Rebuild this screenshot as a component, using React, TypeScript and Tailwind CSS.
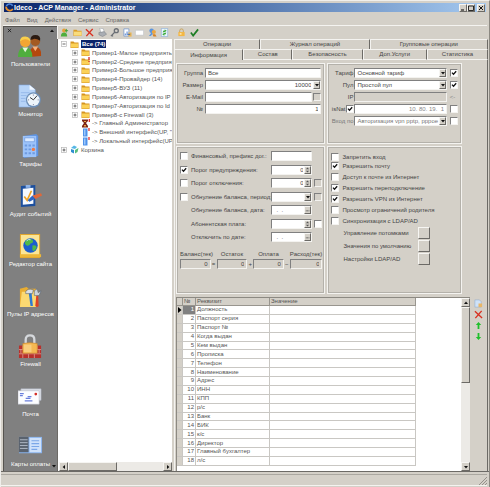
import { useState } from "react";
import type { ReactNode } from "react";
import clsx from "clsx";

const sunken = "border border-t-[#808080] border-l-[#808080] border-r-[#f4f3f0] border-b-[#f4f3f0]";
const raised = "border border-t-[#f6f5f2] border-l-[#f6f5f2] border-r-[#6c6a66] border-b-[#6c6a66] bg-[#d4d0c8]";

/* ---------- small controls ---------- */

function Arrow({ dir = "down" }: { dir?: "up" | "down" | "left" | "right" }) {
  const d = {
    up: "M1 4 L3 1.6 L5 4Z",
    down: "M1 2 L3 4.4 L5 2Z",
    left: "M4 1 L1.6 3 L4 5Z",
    right: "M2 1 L4.4 3 L2 5Z",
  }[dir];
  return (
    <svg viewBox="0 0 6 6" className="size-[6px] shrink-0">
      <path d={d} fill="#111" />
    </svg>
  );
}

function Check({ id, label, on, off, muted }: { id: string; label?: string; on?: boolean; off?: boolean; muted?: boolean }) {
  return (
    <span className="relative flex size-[8px] shrink-0">
      <input
        id={id}
        type="checkbox"
        aria-label={label}
        defaultChecked={on}
        disabled={off}
        className={clsx("peer size-[8px] appearance-none", sunken, muted ? "bg-[#d4d0c8]" : "bg-white")}
      />
      <svg viewBox="0 0 8 8" className="pointer-events-none absolute inset-0 hidden size-[8px] peer-checked:block">
        <path d="M2 3.6 L3.5 5.3 L6.2 2.3" fill="none" stroke="#111" strokeWidth="1.3" />
      </svg>
    </span>
  );
}

function Text({ id, label, value = "", right, off, className }: { id: string; label?: string; value?: string; right?: boolean; off?: boolean; className?: string }) {
  return (
    <input
      id={id}
      type="text"
      aria-label={label}
      defaultValue={value}
      disabled={off}
      className={clsx("h-[10px] min-w-0 px-[2px] outline-none", sunken, right && "text-right", off ? "bg-[#d4d0c8]" : "bg-white", className ?? "w-0 flex-1")}
    />
  );
}

function Drop({ id, value, right, className }: { id: string; value: string; right?: boolean; className?: string }) {
  return (
    <span className={clsx("flex h-[10px] min-w-0 items-center bg-white", sunken, className ?? "flex-1")}>
      <select id={id} className={clsx("h-[8px] w-0 min-w-0 flex-1 appearance-none bg-transparent pl-[2px] outline-none", right && "pr-[2px] [text-align-last:right]")}>
        <option>{value}</option>
      </select>
      <span className={clsx("flex h-[8px] w-[7px] shrink-0 items-center justify-center", raised)}>
        <Arrow />
      </span>
    </span>
  );
}

function Spin({ id, value, dots }: { id: string; value: string; dots?: boolean }) {
  return (
    <span className={clsx("flex h-[10px] w-[41px] items-center bg-white", sunken)}>
      <input id={id} type="text" defaultValue={value} className={clsx("h-[8px] w-0 min-w-0 flex-1 px-[1px] outline-none", dots ? "pl-[4px]" : "text-right")} />
      <span className={clsx("flex h-[8px] w-[7px] shrink-0 items-center justify-center", raised)}>
        <svg viewBox="0 0 6 8" className="h-[8px] w-[6px]">
          {dots ? <path d="M1 5h1M2.6 5h1M4.2 5h1" stroke="#444" /> : <path d="M1 3 L3 1 L5 3ZM1 5 L3 7 L5 5Z" fill="#555" />}
        </svg>
      </span>
    </span>
  );
}

function Group({ children, className }: { children: ReactNode; className?: string }) {
  return (
    <div className="border border-[#f4f3f0]">
      <div className={clsx("h-full border border-[#b4b1aa]", className)}>{children}</div>
    </div>
  );
}

/* ---------- sidebar drawings ---------- */

const sideItems: { title: string; icon: ReactNode }[] = [
  {
    title: "Пользователи",
    icon: (
      <>
        <path d="M12 24 Q11 14 18 13 Q25 14 24 23Z" fill="#b4480e" />
        <path d="M15 13 l3 5 3-5z" fill="#f6b27c" />
        <circle cx="18" cy="7.5" r="5" fill="#a35a22" />
        <path d="M13 6 Q13 1 18 1 Q24 1 23 7 Q20 5 17 5 Q15 6 13 6Z" fill="#2a1a12" />
        <path d="M0 24 Q0 14 7 13.500 Q15 14 15 24Z" fill="#4fae3d" />
        <path d="M4.500 14 l3 5 3-5z" fill="#e8f6dc" />
        <circle cx="7.500" cy="8.500" r="5.300" fill="#f3a632" />
        <path d="M2 8 Q2 2.500 7.500 2.500 Q13 3 13 8 Q10 5 7 5.500 Q4 6 2 8Z" fill="#f8cf4c" />
      </>
    ),
  },
  {
    title: "Монитор",
    icon: (
      <>
        <path d="M1 1 H12 L18 6 V24 H1Z" fill="#b7d4f8" stroke="#7da4de" strokeWidth=".6" />
        <path d="M12 1 V6 H18Z" fill="#f2f8ff" />
        <path d="M3 9h9M3 12h6M3 15h5M3 18h5" stroke="#8eb3e6" strokeWidth=".8" />
        <circle cx="16" cy="16.500" r="7.800" fill="#6d8fb8" />
        <circle cx="16" cy="16.500" r="6.500" fill="#eef5fb" />
        <path d="M16 16.500 L20 12 M16 16.500 L12.500 14" stroke="#333" strokeWidth="1" />
        <path d="M16 11v1M16 21v1M10.500 16.500h1M20.500 16.500h1" stroke="#557" strokeWidth=".8" />
      </>
    ),
  },
  {
    title: "Тарифы",
    icon: (
      <>
        <path d="M6 2 L19 0 L21 2 V23 L6 25Z" fill="#5f93e0" />
        <path d="M5 2 H19 V24 H5Z" fill="#9cc3fa" />
        <path d="M7 4 H17 V8 H7Z" fill="#dcebff" stroke="#5c8bd8" strokeWidth=".6" />
        <path d="M7 11h2.500v2H7zM11 11h2.500v2H11zM15 11h2.500v2H15zM7 15h2.500v2H7zM11 15h2.500v2H11zM7 19h2.500v2H7zM11 19h2.500v2H11zM15 19h2.500v2H15z" fill="#6f9be0" />
        <circle cx="16" cy="16" r="1.800" fill="#ee7b46" />
      </>
    ),
  },
  {
    title: "Аудит событий",
    icon: (
      <>
        <path d="M3 2 L18 1 V23 L3 24Z" fill="#1c4f9e" />
        <path d="M5 5 L16 4 V20.500 L5 21.500Z" fill="#f5f9ff" />
        <path d="M8 1h5v3H8z" fill="#8fb4e8" />
        <path d="M6.500 13 L9.500 17 L14 7" fill="none" stroke="#efa427" strokeWidth="1.800" />
        <path d="M10 17 L15 12 L18 15 L12 18.500Z" fill="#2d66c4" />
        <path d="M15 12 L24 9.500 L25 12 L18 15.500Z" fill="#e0683a" />
      </>
    ),
  },
  {
    title: "Редактор сайта",
    icon: (
      <>
        <path d="M2 0 H23 V25 H2Z" fill="#e0a42c" />
        <path d="M3 1 H22 V24 H3Z" fill="#fbe596" />
        <path d="M2 24 H24 V21 H2Z" fill="#edb83a" />
        <circle cx="13" cy="12" r="7.500" fill="#1d5dcd" />
        <path d="M8 7 Q12 4 15 6 Q17 9 13 10 Q12 13 9 12 Q6 10 8 7ZM15 12 Q19 11 19.500 14 Q17 19 15 17Z" fill="#52b848" />
        <path d="M9 7 Q11 5 13 6" stroke="#c8ecff" fill="none" strokeWidth="1" />
      </>
    ),
  },
  {
    title: "Пулы IP адресов",
    icon: (
      <>
        <path d="M2 5 L9 3 L11 5 H19 V24 H2Z" fill="#e9ad32" />
        <path d="M4 8 H21 L19 24 H2Z" fill="#fbd972" />
        <path d="M11 8 L13 23 L15.500 23 L14 8Z" fill="#2f7ad1" />
        <path d="M8 8 Q10 4 16 6 L15 10 H8Z" fill="#d9dee4" stroke="#596575" strokeWidth=".6" />
        <path d="M19 12 H21 L21.500 23 Q20 25 18 23Z" fill="#dc4126" />
        <path d="M17 7 V12 H22 L24 7 L21 9 L20 5Z" fill="#cbd3da" stroke="#596575" strokeWidth=".6" />
      </>
    ),
  },
  {
    title: "Firewall",
    icon: (
      <>
        <path d="M1 12 H24 V25 H1Z" fill="#b7302b" />
        <path d="M1 16.200h23M1 20.600h23M5 12v4M20 12v4M3 16v4M8 16v4M17 16v4M22 16v4M5 21v4M11 21v4M17 21v4" stroke="#e7b1a6" strokeWidth=".7" />
        <path d="M8 10 V6 Q8 1.500 12.500 1.500 Q17 1.500 17 6 V10" fill="none" stroke="#d5d8dc" strokeWidth="2.400" />
        <path d="M5 10 Q12 8 20 10 V20 H5Z" fill="#f5b851" stroke="#c9842a" strokeWidth=".6" />
        <path d="M6 11 h8 v8 h-8z" fill="#fbd790" opacity=".7" />
      </>
    ),
  },
  {
    title: "Почта",
    icon: (
      <>
        <path d="M3 5 H24 V17 H3Z" fill="#dfe3ea" stroke="#a9aebb" strokeWidth=".6" />
        <path d="M0 7 H22 V21 H0Z" fill="#fcfdff" stroke="#b5bac6" strokeWidth=".6" />
        <path d="M2 10h4M2 12h3M8 15h5M7 17.500h8M10 13h4" stroke="#6a7fdc" strokeWidth="1.300" />
        <circle cx="18.500" cy="10.500" r="1.400" fill="#d42e26" />
      </>
    ),
  },
  {
    title: "Карты оплаты",
    icon: (
      <>
        <path d="M1 3 H25 V20 H1Z" fill="#8ab4ee" />
        <path d="M1 3 H11 V19 H1Z" fill="#59626e" />
        <path d="M2 6h8M2 9h8M2 12h8M2 15h8" stroke="#b9c3cf" strokeWidth=".9" />
        <path d="M12 4 H24 V19 H12Z" fill="#cfe2fb" />
        <path d="M14 7h8M14 10h8M14 13h8M14 16h6" stroke="#7ba7e8" strokeWidth="1.200" />
      </>
    ),
  },
];

function Sidebar() {
  return (
    <nav className="relative flex w-[54px] shrink-0 flex-col border-t border-l border-[#55534f] bg-[#808080] text-white">
      <div className="flex h-[7px] items-center justify-between pr-[2px] pl-[3px]">
        <button type="button" aria-label="Закрыть панель">
          <svg viewBox="0 0 6 6" className="block size-[5px]"><path d="M1 1 L5 5 M5 1 L1 5" stroke="#111" strokeWidth=".9" /></svg>
        </button>
        <Arrow dir="up" />
      </div>
      {sideItems.map((it) => (
        <button key={it.title} type="button" className="mb-[15px] flex flex-col items-center last-of-type:mb-0">
          <svg viewBox="0 0 26 26" className="size-[25px]">{it.icon}</svg>
          <span className="h-[10px] whitespace-nowrap leading-[10px]">{it.title}</span>
        </button>
      ))}
      <span className="absolute right-0 bottom-[2px]"><Arrow /></span>
    </nav>
  );
}

/* ---------- toolbar ---------- */

const redCross = <path d="M1 1.500 L9 9 M8.500 1 L1.500 9" stroke="#d83020" strokeWidth="1.500" fill="none" />;

const tools: { name: string; icon: ReactNode }[] = [
  { name: "Добавить пользователя", icon: <><circle cx="4.500" cy="2.800" r="2.200" fill="#e7a13a" /><path d="M1 9.500 Q1 5 4.500 5 Q8 5 8 9.500Z" fill="#4fae3d" /><path d="M7 1v4M5.500 3h3.500" stroke="#39a02c" strokeWidth="1" /></> },
  { name: "Добавить группу", icon: <><path d="M.5 2 H4 L5 3 H9.500 V9 H.5Z" fill="#d99c27" /><path d="M1 4 H9.500 V8.500 H1Z" fill="#f9dc7c" /></> },
  { name: "Удалить", icon: redCross },
  { name: "Печать", icon: <><path d="M2 0 L6 1 L7 5 L3 5Z" fill="#fff" stroke="#8b939c" strokeWidth=".5" /><path d="M1 5 L7 4 L9.500 7 L5 9.500 L1 7.500Z" fill="#a9adb3" stroke="#6f747b" strokeWidth=".5" /></> },
  { name: "Пароль", icon: <><circle cx="7" cy="3" r="2.200" fill="none" stroke="#6b6f75" strokeWidth="1.500" /><path d="M5.500 4.500 L1 9 M2 8 L3.300 9.300" stroke="#6b6f75" strokeWidth="1.400" /></> },
  { name: "Отчёт", icon: <><path d="M1 1 H6.500 V9 H1Z" fill="#fff" stroke="#5c87c8" strokeWidth=".7" /><path d="M2 6h1v2H2zM4 4h1v4H4z" fill="#3a70ca" /><path d="M6 5 H9.500 V9.500 H6Z" fill="#e9b552" /><path d="M5 7h3" stroke="#2c5db0" /></> },
  { name: "Письмо", icon: <path d="M.5 2.500 H9.500 V8 H.5Z" fill="#fff" stroke="#b9bcc4" strokeWidth=".6" /> },
  { name: "Права", icon: <><circle cx="4" cy="3" r="2.500" fill="#5a94dd" /><circle cx="6.500" cy="4.500" r="2.300" fill="#eda640" /><path d="M1 9 L4 5 L5.500 6.500 L3 9Z" fill="#5a94dd" /><path d="M5 7h3l1.500 2.500H6z" fill="#d88222" /></> },
  { name: "Обновить", icon: <><path d="M1.500 .5 H8.500 V9.500 H1.500Z" fill="#eaf5ff" stroke="#7ba5d6" strokeWidth=".6" /><path d="M3 5 Q3 2.500 5.500 2.500 L5 1.500 L7.500 3 L5.500 4.500 M7 5 Q7 7.500 4.500 7.500 L5 8.800 L2.500 7 L4.500 5.500" fill="#42ad3f" /></> },
];

const tools2: { name: string; icon: ReactNode }[] = [
  { name: "Заблокировать", icon: <><path d="M3 5 V3 Q3 1 5 1 Q7 1 7 3 V5" fill="none" stroke="#c9a45c" strokeWidth="1.100" /><path d="M1.500 4.500 H8.500 V9 H1.500Z" fill="#f4b744" /><path d="M3 5.500h2v2H3z" fill="#fde3a3" /></> },
  { name: "Применить", icon: <path d="M1 5 L3.500 8.500 L9 1.500" fill="none" stroke="#1d7d25" strokeWidth="1.900" /> },
];

function ToolButton({ name, children }: { name: string; children: ReactNode }) {
  return (
    <button type="button" aria-label={name} className="size-[9px]">
      <svg viewBox="0 0 10 10" className="size-full">{children}</svg>
    </button>
  );
}

/* ---------- tree ---------- */

const folders = [
  { t: "Пример1-Малое предприять" },
  { t: "Пример2-Среднее предприя", mark: true },
  { t: "Пример3-Большое предприя" },
  { t: "Пример4-Провайдер (14)" },
  { t: "Пример5-ВУЗ (11)" },
  { t: "Пример6-Авторизация по IP" },
  { t: "Пример7-Авторизация по Id" },
  { t: "Пример8-с Firewall (3)" },
];

function Box({ plus }: { plus?: boolean }) {
  return (
    <svg viewBox="0 0 6 6" className="mr-[3px] size-[6px] shrink-0">
      <rect x=".5" y=".5" width="5" height="5" fill="#fff" stroke="#b5b5b5" strokeWidth=".7" />
      <path d={plus ? "M1.500 3h3M3 1.500v3" : "M1.500 3h3"} stroke="#444" strokeWidth=".8" />
    </svg>
  );
}

function Folder({ mark }: { mark?: boolean }) {
  return (
    <svg viewBox="0 0 9 9" className="mr-[2px] size-[9px] shrink-0">
      <path d="M.5 1.500 H3.500 L4.500 2.500 H8.500 V8 H.5Z" fill="#d59420" />
      <path d="M1 3.500 H8 V7.500 H1Z" fill="#fbd258" />
      {mark && <path d="M8 0v3M8 4v1" stroke="#d01818" strokeWidth="1.200" />}
    </svg>
  );
}

function Tree() {
  return (
    <section className="flex w-[115px] shrink-0 flex-col border-l border-[#6c6a66] bg-white text-[#555]">
      <ul className="flex h-[115px] flex-col justify-between overflow-hidden pt-[1px] whitespace-nowrap *:flex *:h-[8px] *:items-center *:leading-[8px]">
        <li className="pl-[3px]">
          <Box />
          <Folder />
          <span className="bg-[#0a246a] px-[1px] font-bold text-white">Все (74)</span>
        </li>
        {folders.map((f) => (
          <li key={f.t} className="pl-[14px]">
            <Box plus />
            <Folder mark={f.mark} />
            {f.t}
          </li>
        ))}
        <li className="pl-[23px]">
          <svg viewBox="0 0 9 9" className="mr-[2px] size-[9px] shrink-0">
            <path d="M1 .5 H7 V2 L5 4 L7 7 V8.500 H1 V7 L3 4 L1 2Z" fill="#7c2416" />
            <path d="M3 2h2v1H3zM3 6h2v1.500H3z" fill="#e9a545" />
            <path d="M8.300 0v3" stroke="#e01818" strokeWidth="1.200" />
          </svg>
          -&gt; Главный Администратор
        </li>
        {["Внешний интерфейс(UP, \"", "Локальный интерфейс(UP"].map((t) => (
          <li key={t} className="pl-[23px]">
            <svg viewBox="0 0 9 9" className="mr-[2px] size-[9px] shrink-0">
              <path d="M2 .5 H6.500 V8.500 H2Z" fill="#4f92ea" />
              <path d="M3 1.500h1.500v6H3z" fill="#9cc7fb" />
              <path d="M8 0v3" stroke="#e01818" strokeWidth="1.200" />
            </svg>
            -&gt; {t}
          </li>
        ))}
        <li className="pl-[3px]">
          <Box plus />
          <svg viewBox="0 0 9 9" className="mr-[2px] size-[9px] shrink-0">
            <path d="M1 3 L4 0.500 L7 2 L5 4Z" fill="#56b7e6" />
            <path d="M1 4 L4 5 L4 8.500 L1 7Z" fill="#2f8ed0" />
            <path d="M5 5 L8.500 3 L7.500 7 L5 8.500Z" fill="#58bd7e" />
          </svg>
          Корзина
        </li>
      </ul>
      <div className="flex-1" />
      <div className="ml-[1px] flex h-[9px] bg-[#eceae6]">
        <button type="button" aria-label="Влево" className={clsx("flex w-[9px] items-center justify-center", raised)}><Arrow dir="left" /></button>
        <div className={clsx("w-[49px]", raised)} />
        <div className="flex-1" />
        <button type="button" aria-label="Вправо" className={clsx("flex w-[9px] items-center justify-center", raised)}><Arrow dir="right" /></button>
      </div>
    </section>
  );
}

/* ---------- tabs ---------- */

const tabEdge = "min-w-0 border-t border-l border-t-[#f4f3f0] border-l-[#f4f3f0] border-r border-r-[#6c6a66] whitespace-nowrap text-center leading-[9px]";

function Tabs() {
  const [active, setActive] = useState("Информация");
  const tab = (t: string, extra?: string) => (
    <button key={t} type="button" role="tab" aria-selected={active === t} onClick={() => setActive(t)} className={clsx(tabEdge, extra)}>
      {t}
    </button>
  );
  return (
    <div role="tablist">
      <div className="grid h-[10px] grid-cols-[86fr_109fr_118fr]">
        {tab("Операции")}
        {tab("Журнал операций")}
        {tab("Групповые операции")}
      </div>
      <div className="grid h-[11px] grid-cols-[69fr_49fr_70fr_64fr_61fr]">
        {tab("Информация")}
        {tab("Состав", "border-b border-b-[#f4f3f0]")}
        {tab("Безопасность", "border-b border-b-[#f4f3f0]")}
        {tab("Доп.Услуги", "border-b border-b-[#f4f3f0]")}
        {tab("Статистика", "border-b border-b-[#f4f3f0]")}
      </div>
    </div>
  );
}

/* ---------- information page ---------- */

function GeneralBox() {
  const lab = "w-[27px] shrink-0 pr-[2px] text-right whitespace-nowrap";
  return (
    <Group className="flex flex-col gap-[2px] pt-[3px] pr-[2px] *:flex *:h-[10px] *:items-center">
      <div><label htmlFor="grp" className={lab}>Группа</label><Text id="grp" value="Все" /></div>
      <div><label htmlFor="size" className={lab}>Размер</label><Drop id="size" value="10000" right /></div>
      <div><label htmlFor="mail" className={lab}>E-Mail</label><Text id="mail" /><span className="w-[1px]" /><Check id="mailOn" label="Отправлять" off muted /></div>
      <div><label htmlFor="num" className={lab}>№</label><Text id="num" value="1" right /></div>
    </Group>
  );
}

function NetworkBox() {
  const lab = "w-[25px] shrink-0 pr-[1px] text-right whitespace-nowrap";
  return (
    <Group className="flex flex-col gap-[2px] pt-[3px] pr-[2px] *:flex *:h-[10px] *:items-center">
      <div><label htmlFor="tariff" className={lab}>Тариф</label><Drop id="tariff" value="Основной тариф" /><span className="w-[3px]" /><Check id="c1" label="Тариф включён" on /></div>
      <div><label htmlFor="pool" className={lab}>Пул</label><Drop id="pool" value="Простой пул" /><span className="w-[3px]" /><Check id="c2" label="Пул включён" on /></div>
      <div><label htmlFor="ip" className={lab}>IP</label><Text id="ip" off /><button type="button" className="w-[11px] text-[#888]">&lt;-</button></div>
      <div>
        <label htmlFor="nat" className="w-[17px] shrink-0 pr-[1px] text-right">isNat</label>
        <Check id="nat" on />
        <Text id="natip" label="Адрес NAT" value="10. 80. 19.  1" right className="w-0 flex-1 text-[#888]" />
        <span className="w-[3px]" />
        <Check id="c3" label="Адрес NAT включён" />
      </div>
      <div className="text-[#777]"><label htmlFor="login" className={lab}>Вход по</label><Drop id="login" value="Авторизация vpn pptp, pppoe" /><span className="w-[3px]" /><Check id="c4" label="Вход включён" /></div>
    </Group>
  );
}

function FinanceBox() {
  const rows: { id: string; label: string; check?: boolean; on?: boolean; field: ReactNode; tail?: ReactNode }[] = [
    { id: "f1", label: "Финансовый, префикс дог.:", check: true, field: <Text id="f1" className="w-[41px]" /> },
    { id: "f2", label: "Порог предупреждения:", check: true, on: true, field: <Spin id="f2" value="0" /> },
    { id: "f3", label: "Порог отключения:", check: true, field: <Spin id="f3" value="0" />, tail: <Check id="f3t" label="По умолчанию" off muted /> },
    { id: "f4", label: "Обнуление баланса, период:", check: true, field: <Drop id="f4" value="" className="w-[41px]" />, tail: <Check id="f4t" label="По умолчанию" off muted /> },
    { id: "f5", label: "Обнуление баланса, дата:", field: <Spin id="f5" value=".  ." dots /> },
    { id: "f6", label: "Абонентская плата:", field: <Spin id="f6" value="" />, tail: <Check id="f6t" label="Своя плата" /> },
    { id: "f7", label: "Отключить по дате:", field: <Spin id="f7" value=".  ." dots /> },
  ];
  const sums = [
    ["Баланс(тек)", "="],
    ["Остаток", "+"],
    ["Оплата", "−"],
    ["Расход(тек)", ""],
  ];
  return (
    <Group className="pt-[3px] pl-[2px]">
      <div className="flex h-[91px] flex-col justify-between">
        {rows.map((r) => (
          <div key={r.id} className="flex h-[10px] items-center">
            <span className="w-[11px] shrink-0">{r.check && <Check id={r.id + "c"} label={r.label} on={r.on} />}</span>
            <label htmlFor={r.id} className="min-w-0 flex-1 whitespace-nowrap">{r.label}</label>
            {r.field}
            <span className="ml-[2px] w-[9px] shrink-0">{r.tail}</span>
          </div>
        ))}
      </div>
      <div className="mt-[8px] flex pr-[1px]">
        {sums.map(([t, op], i) => (
          <div key={t} className={clsx("min-w-0", i < 3 ? "flex-[37]" : "flex-[33]")}>
            <label htmlFor={"s" + i} className={clsx("block h-[9px] leading-[9px] whitespace-nowrap", i === 1 || i === 2 ? "pr-[6px] text-center" : "text-left")}>{t}</label>
            <div className="flex items-center">
              <Text id={"s" + i} value="0" right off />
              {op && <span className="w-[6px] text-center">{op}</span>}
            </div>
          </div>
        ))}
      </div>
    </Group>
  );
}

function RightsBox() {
  const checks = [
    { t: "Разрешить почту", on: true },
    { t: "Доступ к почте из Интернет" },
    { t: "Разрешить переподключение", on: true },
    { t: "Разрешить VPN из Интернет", on: true },
    { t: "Просмотр ограничений родителя" },
    { t: "Синхронизация с LDAP/AD" },
  ];
  const row = "flex h-[9px] items-center gap-[3px]";
  return (
    <Group className="pt-[4px] pl-[2px]">
      <div className={row}><Check id="r" /><label htmlFor="r">Запретить вход</label></div>
      <div className="flex flex-col gap-[2px]">
        {checks.map((c, i) => (
          <div key={c.t} className={row}>
            <Check id={"r" + i} on={c.on} />
            <label htmlFor={"r" + i} className="whitespace-nowrap">{c.t}</label>
          </div>
        ))}
      </div>
      <div className="mt-[2px] flex w-[99px] flex-col gap-[1px] pl-[12px]">
        {["Управление потомками", "Значения по умолчанию", "Настройки LDAP/AD"].map((t, i) => (
          <div key={t} className="flex h-[12px] items-center justify-between whitespace-nowrap">
            <label htmlFor={"b" + i}>{t}</label>
            <button id={"b" + i} type="button" className={clsx("size-[12px] shrink-0", raised)} />
          </div>
        ))}
      </div>
    </Group>
  );
}

/* ---------- requisites ---------- */

const requisites = [
  "Должность", "Паспорт серия", "Паспорт №", "Когда выдан", "Кем выдан", "Прописка",
  "Телефон", "Наименование", "Адрес", "ИНН", "КПП", "р/с",
  "Банк", "БИК", "к/с", "Директор", "Главный бухгалтер", "л/с",
];

function Requisites() {
  const cell = "border-r border-b border-[#c9c7c3] p-0";
  const head = "border-r border-b border-[#98958e] bg-[#d4d0c8] p-0 pl-[1px] text-left font-normal";
  return (
    <div className="flex flex-1">
      <div className="flex min-w-0 flex-1 items-start border-t border-l border-[#8c8982] bg-white">
        <div className="min-w-0 flex-1 pr-[45px]">
          <table className="h-[168px] w-full table-fixed border-separate border-spacing-0 leading-[7px] text-[#555]">
            <colgroup>
              <col className="w-[6px]" />
              <col className="w-[13px]" />
              <col className="w-[74px]" />
              <col />
            </colgroup>
            <thead>
              <tr><th className={head} /><th className={head}>№</th><th className={head}>Реквизит</th><th className={head}>Значение</th></tr>
            </thead>
            <tbody>
              {requisites.map((r, i) => (
                <tr key={r}>
                  <td className={clsx(cell, "bg-[#d4d0c8]")}>
                    {i === 0 && <svg viewBox="0 0 5 6" className="block h-[6px] w-[5px]"><path d="M1 0 L4.500 3 L1 6Z" fill="#000" /></svg>}
                  </td>
                  <td className={clsx(cell, "pr-[1px] text-right", i === 0 && "bg-[#808080] text-white")}>{i + 1}</td>
                  <td className={clsx(cell, "pl-[1px] whitespace-nowrap")}>{r}</td>
                  <td className={cell} />
                </tr>
              ))}
            </tbody>
          </table>
        </div>
        <div className="flex w-[9px] flex-col self-stretch bg-[#eceae6]">
          <button type="button" aria-label="Вверх" className={clsx("flex h-[9px] items-center justify-center", raised)}><Arrow dir="up" /></button>
          <div className={clsx("h-[76px]", raised)} />
          <div className="flex-1" />
          <button type="button" aria-label="Вниз" className={clsx("flex h-[9px] items-center justify-center", raised)}><Arrow /></button>
        </div>
      </div>
      <div className="flex w-[17px] flex-col items-center gap-[2px] pt-[2px]">
        <ToolButton name="Изменить">
          <path d="M1 1 H6 L8 3 V9 H1Z" fill="#cfe2f8" stroke="#8eabd0" strokeWidth=".6" />
          <path d="M5 5 H9 V9 H5Z" fill="#e9b767" />
        </ToolButton>
        <ToolButton name="Удалить строку">{redCross}</ToolButton>
        <ToolButton name="Строку вверх"><path d="M5 1 L8 4.500 H6 V9 H4 V4.500 H2Z" fill="#1fc02b" /></ToolButton>
        <ToolButton name="Строку вниз"><path d="M5 9 L8 5.500 H6 V1 H4 V5.500 H2Z" fill="#1fc02b" /></ToolButton>
      </div>
    </div>
  );
}

/* ---------- window ---------- */

function TitleBar() {
  const btn = clsx("flex h-[8px] w-[8px] items-center justify-center", raised);
  return (
    <header className="mx-[3px] flex h-[9px] items-center bg-gradient-to-r from-[#0a246a] to-[#a6caf0] pr-[1px] pl-[1px]">
      <svg viewBox="0 0 10 10" className="size-[9px]">
        <path d="M8.500 3 A4 4 0 0 0 1.500 3.500" fill="none" stroke="#4d86dc" strokeWidth="1.800" />
        <path d="M1.300 4 A4 4 0 0 0 8.700 6.500" fill="none" stroke="#e8912c" strokeWidth="1.900" />
      </svg>
      <h1 className="flex-1 text-[7px] leading-[9px] font-bold whitespace-nowrap text-white">Ideco - ACP Manager - Administrator</h1>
      <button type="button" aria-label="Свернуть" className={btn}><svg viewBox="0 0 6 6" className="size-[6px]"><path d="M1 5h3" stroke="#000" /></svg></button>
      <button type="button" aria-label="Развернуть" className={btn}><svg viewBox="0 0 6 6" className="size-[6px]"><path d="M.5 1h5v4.500h-5z" fill="none" stroke="#000" strokeWidth=".8" /></svg></button>
      <button type="button" aria-label="Закрыть" className={clsx(btn, "ml-[2px]")}><svg viewBox="0 0 6 6" className="size-[6px]"><path d="M1 1 L5 5 M5 1 L1 5" stroke="#000" strokeWidth=".9" /></svg></button>
    </header>
  );
}

export default function App() {
  return (
    <div className="flex min-h-screen flex-col border-t border-l border-t-[#f0efec] border-l-[#f0efec] border-r border-r-[#8c8982] bg-[#d4d0c8] pt-[2px] font-['Liberation_Sans',Arial,sans-serif] text-[6px] leading-[8px] text-[#444]">
      <TitleBar />
      <nav className="mx-[2px] flex h-[14px] items-center gap-[7px] border-b border-[#f4f3f0] pt-[2px] pl-[2px] text-[#666]">
        {["Файл", "Вид", "Действия", "Сервис", "Справка"].map((m) => (
          <button key={m} type="button">{m}</button>
        ))}
      </nav>
      <div className="flex flex-1 pr-[1px] pl-[2px]">
        <Sidebar />
        <div className="flex min-w-0 flex-1 flex-col">
          <div className="flex h-[13px] items-center border-l border-[#f4f3f0] pl-[2px]">
            <div className="flex w-[109px] justify-between">
              {tools.map((t) => <ToolButton key={t.name} name={t.name}>{t.icon}</ToolButton>)}
            </div>
            <div className="ml-[8px] flex gap-[4px]">
              {tools2.map((t) => <ToolButton key={t.name} name={t.name}>{t.icon}</ToolButton>)}
            </div>
          </div>
          <div className="flex flex-1">
            <Tree />
            <div className="ml-[2px] flex min-w-0 flex-1 flex-col">
              <Tabs />
              <main className="flex flex-1 flex-col border-r border-l border-r-[#6c6a66] border-l-[#f4f3f0] pt-[3px] pl-[1px]">
                <div className="mr-[25px] grid grid-cols-[minmax(0,150fr)_minmax(0,135fr)] grid-rows-[81px_148px] gap-[2px]">
                  <GeneralBox />
                  <NetworkBox />
                  <FinanceBox />
                  <RightsBox />
                </div>
                <div className="mt-[3px] flex flex-1">
                  <Requisites />
                </div>
              </main>
            </div>
          </div>
        </div>
      </div>
      <footer className="flex h-[16px] items-end justify-end border-t border-t-[#6c6a66] pr-[2px] pb-[1px]">
        <div className="flex h-[12px] flex-1 items-end justify-end border-t border-b border-t-[#aaa7a0] border-b-[#f4f3f0]">
          <svg viewBox="0 0 8 8" className="size-[8px]"><path d="M0 8 L8 0M3 8 L8 3M6 8 L8 6" stroke="#8c8982" strokeWidth=".9" /></svg>
        </div>
      </footer>
    </div>
  );
}
